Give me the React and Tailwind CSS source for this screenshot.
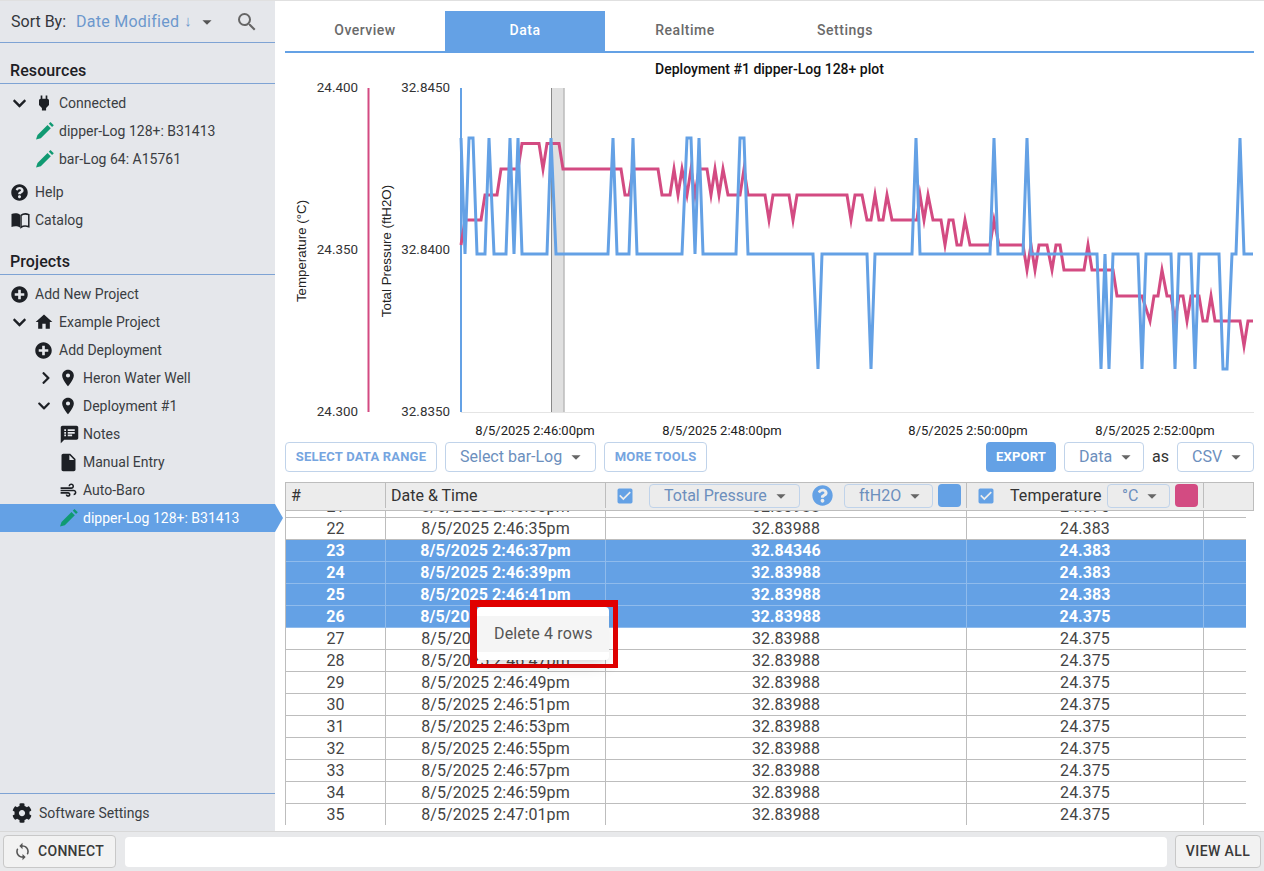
import { FaChevronDown, FaChevronRight, FaPlusCircle, FaQuestionCircle, FaCog } from 'react-icons/fa';
import {
  MdPower, MdHome, MdPlace, MdSpeakerNotes, MdInsertDriveFile, MdAir,
  MdSearch, MdArrowDropDown, MdCheckBox, MdSync,
} from 'react-icons/md';

const FONT = "font-['Roboto',sans-serif]";

// chart levels, in page pixels
const T = 138;
const B = 254;
const L = 369;
const R = [0, 143.5, 169, 195, 220, 245, 270, 296, 321, 346];

const bluePoints = [
  [461, T], [465, B], [469, T], [473, T], [477, B], [485, B], [489, T], [494, B], [506, B], [510, T], [514, B],
  [518, T], [522, B], [547, B], [551, T], [556, B], [608, B], [613, T], [617, B], [629, B], [633, T], [637, B],
  [682, B], [687, T], [691, T], [695, B], [699, T], [703, B], [736, B], [740, T], [744, T], [748, B], [813, B],
  [818, L], [822, B], [867, B], [871, L], [875, B], [912, B], [916, T], [920, B], [990, B], [994, T], [998, B],
  [1023, B], [1027, T], [1031, B], [1097, B], [1101, L], [1105, B], [1109, L], [1113, B], [1138, B], [1142, L],
  [1146, B], [1171, B], [1175, L], [1179, B], [1191, B], [1195, L], [1199, B], [1219, B], [1223, L], [1227, L],
  [1232, B], [1236, B], [1240, T], [1244, B], [1253, B],
];

const pinkPoints = [
  [461, 5], [465, 4], [481, 4], [485, 3], [497, 3], [501, 2], [518, 2], [522, 1], [539, 1], [543, 2], [547, 1],
  [559, 1], [563, 2], [621, 2], [625, 3], [629, 3], [633, 2], [658, 2], [662, 3], [670, 3], [674, 2], [678, 3],
  [682, 2], [687, 3], [691, 2], [695, 3], [699, 2], [707, 2], [711, 3], [715, 2], [719, 3], [723, 2], [728, 3],
  [740, 3], [744, 2], [748, 3], [765, 3], [769, 4], [773, 3], [789, 3], [793, 4], [797, 3], [847, 3], [851, 4],
  [855, 3], [862, 3], [867, 4], [871, 4], [875, 3], [879, 4], [883, 4], [887, 3], [892, 4], [917, 4], [920, 3],
  [924, 4], [928, 3], [933, 4], [941, 4], [945, 5], [949, 4], [953, 4], [957, 5], [961, 5], [965, 4], [970, 5],
  [990, 5], [994, 4], [999, 5], [1023, 5], [1027, 6], [1031, 5], [1035, 6], [1039, 5], [1047, 5], [1052, 6],
  [1056, 5], [1060, 5], [1064, 6], [1084, 6], [1088, 5], [1092, 6], [1113, 6], [1117, 7], [1142, 7], [1150, 8],
  [1154, 7], [1158, 7], [1162, 6], [1167, 7], [1171, 7], [1175, 8], [1179, 7], [1183, 7], [1187, 8], [1191, 7],
  [1199, 7], [1203, 8], [1207, 8], [1211, 7], [1215, 8], [1240, 8], [1244, 9], [1248, 8], [1253, 8],
];

const toLine = (points) => points.map(([x, y]) => `${x},${y}`).join(' ');
const bluePolyline = toLine(bluePoints);
const pinkPolyline = toLine(pinkPoints.map(([x, level]) => [x, R[level]]));

const rows = [
  [21, '8/5/2025 2:46:33pm', '32.83988', '24.375'],
  [22, '8/5/2025 2:46:35pm', '32.83988', '24.383'],
  [23, '8/5/2025 2:46:37pm', '32.84346', '24.383', true],
  [24, '8/5/2025 2:46:39pm', '32.83988', '24.383', true],
  [25, '8/5/2025 2:46:41pm', '32.83988', '24.383', true],
  [26, '8/5/2025 2:46:43pm', '32.83988', '24.375', true],
  [27, '8/5/2025 2:46:45pm', '32.83988', '24.375'],
  [28, '8/5/2025 2:46:47pm', '32.83988', '24.375'],
  [29, '8/5/2025 2:46:49pm', '32.83988', '24.375'],
  [30, '8/5/2025 2:46:51pm', '32.83988', '24.375'],
  [31, '8/5/2025 2:46:53pm', '32.83988', '24.375'],
  [32, '8/5/2025 2:46:55pm', '32.83988', '24.375'],
  [33, '8/5/2025 2:46:57pm', '32.83988', '24.375'],
  [34, '8/5/2025 2:46:59pm', '32.83988', '24.375'],
  [35, '8/5/2025 2:47:01pm', '32.83988', '24.375'],
];

const Pencil = () => (
  <svg width="20" height="20" viewBox="0 0 20 20" className="shrink-0">
    <path d="M1 18.5 L2.5 14 L12.5 4 L15.8 7.3 L5.8 17.3 Z" fill="#109a72" />
    <path d="M13.8 2.7 L15.5 1 L18.8 4.3 L17.1 6 Z" fill="#109a72" />
  </svg>
);

const BookIcon = () => (
  <svg width="19" height="17" viewBox="0 0 19 17">
    <path d="M0.5 2 C3 1 7 1 9 2.8 V15.5 C7 14 3 14 0.5 15 Z" fill="#1d2025" />
    <path d="M10 3.4 C12 1.8 15.5 1.7 17.8 2.6 V14.8 C15.5 14 12 14 10 15.4 Z" fill="none" stroke="#1d2025" strokeWidth="1.5" />
  </svg>
);

const NavRow = ({ indent, icon, chevron, children, height = 'h-7' }) => (
  <div className={`flex items-center ${height} text-[14px] text-[#3a3d42]`} style={{ paddingLeft: indent }}>
    {chevron && <span className="w-[24px] flex items-center text-[#1d2025]">{chevron}</span>}
    <span className="w-[24px] flex items-center text-[#1d2025]">{icon}</span>
    <span className="whitespace-nowrap">{children}</span>
  </div>
);

const Sidebar = () => (
  <aside className="w-[275px] shrink-0 bg-[#e5e7eb] flex flex-col">
    <div className="h-[42px] shrink-0 flex items-center pl-[11px] border-b border-[#7ea3d4] text-[16px] text-[#33363b]">
      <span>Sort By:</span>
      <span className="ml-[10px] tracking-[0.25px] text-[#6c98cd]">Date Modified</span>
      <span className="ml-[5px] text-[#6c98cd] text-[15px]">↓</span>
      <MdArrowDropDown className="ml-[4px] text-[22px] text-[#555]" />
      <MdSearch className="ml-[17px] text-[24px] text-[#666]" />
    </div>

    <div className="h-[41px] shrink-0 flex items-end pl-[10px] border-b border-[#7ea3d4] text-[16px] font-medium tracking-[0.1px] text-[#1d2025]">
      Resources
    </div>
    <div className="pt-[5px]">
      <NavRow indent={11} chevron={<FaChevronDown className="text-[15px] ml-[1px]" />} icon={<MdPower className="text-[20px] -ml-[1px]" />}>
        Connected
      </NavRow>
      <NavRow indent={35} icon={<Pencil />}>dipper-Log 128+: B31413</NavRow>
      <NavRow indent={35} icon={<Pencil />}>bar-Log 64: A15761</NavRow>
      <div className="h-[5px]" />
      <NavRow indent={11} icon={<FaQuestionCircle className="text-[17px]" />}>Help</NavRow>
      <NavRow indent={11} icon={<BookIcon />}>Catalog</NavRow>
    </div>

    <div className="h-[41px] shrink-0 flex items-end pl-[10px] border-b border-[#7ea3d4] text-[16px] font-medium tracking-[0.1px] text-[#1d2025]">
      Projects
    </div>
    <div className="pt-[5px]">
      <NavRow indent={11} icon={<FaPlusCircle className="text-[17px]" />}>Add New Project</NavRow>
      <NavRow indent={11} chevron={<FaChevronDown className="text-[15px] ml-[1px]" />} icon={<MdHome className="text-[20px] -ml-[1px]" />}>
        Example Project
      </NavRow>
      <NavRow indent={35} icon={<FaPlusCircle className="text-[17px]" />}>Add Deployment</NavRow>
      <NavRow indent={35} chevron={<FaChevronRight className="text-[14px] ml-[4px]" />} icon={<MdPlace className="text-[20px] -ml-[1px]" />}>
        Heron Water Well
      </NavRow>
      <NavRow indent={35} chevron={<FaChevronDown className="text-[14px] ml-[2px]" />} icon={<MdPlace className="text-[20px] -ml-[1px]" />}>
        Deployment #1
      </NavRow>
      <NavRow indent={59} icon={<MdSpeakerNotes className="text-[21px]" />}>Notes</NavRow>
      <NavRow indent={59} icon={<MdInsertDriveFile className="text-[21px] -ml-[1px]" />}>Manual Entry</NavRow>
      <NavRow indent={59} icon={<MdAir className="text-[19px]" />}>Auto-Baro</NavRow>
      <div className="relative w-[284px] h-7 pl-[59px] flex items-center bg-[#64a1e5] text-white text-[14px] [clip-path:polygon(0_0,275px_0,283px_50%,275px_100%,0_100%)]">
        <span className="w-[24px] flex items-center"><Pencil /></span>
        dipper-Log 128+: B31413
      </div>
    </div>

    <div className="mt-auto h-[38px] shrink-0 flex items-center pl-[12px] pt-[1px] border-t border-[#7ea3d4] text-[14px] text-[#3a3d42]">
      <FaCog className="text-[20px] text-[#1d2025] mr-[7px]" />
      Software Settings
    </div>
  </aside>
);

const Tabs = () => {
  const tabs = ['Overview', 'Data', 'Realtime', 'Settings'];
  return (
    <div className="flex h-[42px] shrink-0 border-b-2 border-[#64a1e5]">
      {tabs.map((tab) => (
        <div
          key={tab}
          className={`w-[160px] flex items-center justify-center pb-[2px] text-[14px] font-medium tracking-[0.5px] ${
            tab === 'Data' ? 'bg-[#64a1e5] text-white font-bold' : 'text-[#6a6a6a]'
          }`}
        >
          {tab}
        </div>
      ))}
    </div>
  );
};

const Chart = () => (
  <svg viewBox="285 58 969 384" className="w-[969px] h-[384px] block shrink-0">
    <text x="769.5" y="74" textAnchor="middle" fontFamily="Roboto, sans-serif" fontWeight="500" fontSize="14" fill="#111">
      Deployment #1 dipper-Log 128+ plot
    </text>

    <g fontFamily="Roboto, sans-serif" fontSize="13.4" fill="#333" textAnchor="end">
      <text x="358" y="92">24.400</text>
      <text x="358" y="254">24.350</text>
      <text x="358" y="416">24.300</text>
      <text x="450" y="92">32.8450</text>
      <text x="450" y="254">32.8400</text>
      <text x="450" y="416">32.8350</text>
    </g>

    <g fontFamily="'Liberation Sans', sans-serif" fontSize="13.3" fill="#222" textAnchor="middle">
      <text transform="translate(306 251) rotate(-90)">Temperature (°C)</text>
      <text transform="translate(391 251) rotate(-90)">Total Pressure (ftH2O)</text>
    </g>

    <g fontFamily="Roboto, sans-serif" fontSize="13" fill="#222" textAnchor="middle">
      <text x="535" y="435">8/5/2025 2:46:00pm</text>
      <text x="722" y="435">8/5/2025 2:48:00pm</text>
      <text x="968" y="435">8/5/2025 2:50:00pm</text>
      <text x="1155" y="435">8/5/2025 2:52:00pm</text>
    </g>

    <line x1="368.5" y1="88" x2="368.5" y2="412" stroke="#d34b82" strokeWidth="2" />
    <line x1="461" y1="88" x2="461" y2="412" stroke="#64a1e5" strokeWidth="2" />
    <line x1="461" y1="412.5" x2="1254" y2="412.5" stroke="#e4e4e4" strokeWidth="1" />

    <rect x="551" y="88" width="13" height="324" fill="#e0e0e0" />
    <line x1="551.5" y1="88" x2="551.5" y2="412" stroke="#888" strokeWidth="1" />
    <line x1="564" y1="88" x2="564" y2="412" stroke="#bbb" strokeWidth="1.5" />

    <polyline points={pinkPolyline} fill="none" stroke="#d34b82" strokeWidth="3" strokeMiterlimit="10" />
    <polyline points={bluePolyline} fill="none" stroke="#64a1e5" strokeWidth="3" />
  </svg>
);

const OutlineButton = ({ className, children }) => (
  <div className={`h-[30px] flex items-center justify-center rounded border border-[#c0d3ea] text-[13px] font-bold tracking-[0.2px] text-[#76a5e0] ${className}`}>
    {children}
  </div>
);

const SelectBox = ({ className, text, small }) => (
  <div className={`flex items-center pl-[14px] rounded border border-[#c0d3ea] text-[16px] text-[#6c8fbd] ${small ? 'h-6' : 'h-[30px]'} ${className}`}>
    <span>{text}</span>
    <MdArrowDropDown className="text-[22px] text-[#666] ml-[3px]" />
  </div>
);

const Toolbar = () => (
  <div className="flex items-center h-[30px] shrink-0">
    <OutlineButton className="w-[152px]">SELECT DATA RANGE</OutlineButton>
    <SelectBox className="w-[151px] ml-2" text="Select bar-Log" />
    <OutlineButton className="w-[103px] ml-2">MORE TOOLS</OutlineButton>
    <div className="ml-auto h-[30px] w-[70px] flex items-center justify-center rounded bg-[#64a1e5] text-white text-[13px] font-bold tracking-[0.2px]">
      EXPORT
    </div>
    <SelectBox className="w-[80px] ml-2" text="Data" />
    <span className="w-[33px] text-center text-[16px] text-[#333]">as</span>
    <SelectBox className="w-[77px]" text="CSV" />
  </div>
);

const TableHeader = () => (
  <div className="grid grid-cols-[99px_220px_361px_237px_50px] h-[29px] pb-[2px] shrink-0 bg-[#ececec] border border-[#bdbdbd] text-[16px] text-[#333]">
    <div className="flex items-center pl-[5px]">#</div>
    <div className="flex items-center pl-[5px] border-l border-[#bdbdbd]">Date &amp; Time</div>
    <div className="flex items-center pl-[9px] border-l border-[#bdbdbd]">
      <MdCheckBox className="text-[20px] text-[#64a1e5]" />
      <SelectBox small className="w-[151px] ml-[14px]" text="Total Pressure" />
      <FaQuestionCircle className="ml-[12px] text-[21px] text-[#64a1e5]" />
      <SelectBox small className="w-[89px] ml-[11px]" text="ftH2O" />
      <div className="ml-[5px] w-[23px] h-[23px] rounded-sm bg-[#64a1e5]" />
    </div>
    <div className="flex items-center pl-[9px] border-l border-[#bdbdbd]">
      <MdCheckBox className="text-[20px] text-[#64a1e5]" />
      <span className="ml-[14px] w-[92px] tracking-[0.1px] whitespace-nowrap">Temperature</span>
      <SelectBox small className="w-[63px] ml-[5px]" text="°C" />
      <div className="ml-[5px] w-[23px] h-[23px] rounded-sm bg-[#d34b82]" />
    </div>
    <div className="border-l border-[#bdbdbd]" />
  </div>
);

const TableBody = () => (
  <div className="h-[314px] overflow-hidden shrink-0 border-l border-[#bdbdbd]">
    <div className="-mt-[15px]">
      {rows.map(([num, date, pressure, temp, selected]) => (
        <div
          key={num}
          className={`grid grid-cols-[99px_220px_361px_237px_43px] h-[22px] w-[960px] border-b text-[16px] leading-[21px] tracking-[0.1px] text-center ${
            selected ? 'bg-[#64a1e5] text-white font-bold border-[#8fbbec]' : 'text-[#444] border-[#bdbdbd]'
          }`}
        >
          <div>{num}</div>
          <div className={`border-l ${selected ? 'border-[#8fbbec]' : 'border-[#bdbdbd]'}`}>{date}</div>
          <div className={`border-l ${selected ? 'border-[#8fbbec]' : 'border-[#bdbdbd]'}`}>{pressure}</div>
          <div className={`border-l ${selected ? 'border-[#8fbbec]' : 'border-[#bdbdbd]'}`}>{temp}</div>
          <div className={`border-l ${selected ? 'border-[#8fbbec]' : 'border-[#bdbdbd]'}`} />
        </div>
      ))}
    </div>
  </div>
);

const ContextMenu = () => (
  <>
    <div className="absolute left-[470px] top-[600px] w-[148px] h-[68px] border-t-[7px] border-l-[7px] border-r-[5px] border-b-[4px] border-[#e00000]" />
    <div className="absolute left-[477px] top-[607px] w-[132px] h-[53px] rounded bg-white shadow-lg flex items-center">
      <div className="w-full h-[36px] bg-[#f5f5f5] flex items-center pl-[17px] text-[16px] tracking-[0.15px] text-[#555]">
        Delete 4 rows
      </div>
    </div>
  </>
);

const BottomBar = () => (
  <div className="h-[40px] shrink-0 flex items-center bg-[#e8e9eb] border-t border-[#d8d8d8] pl-[3px] pr-[3px]">
    <div className="w-[113px] h-[33px] flex items-center pl-[9px] rounded border border-[#c8c8c8] bg-[#f2f2f2] text-[14px] font-medium tracking-[0.3px] text-[#3a3a3a]">
      <MdSync className="text-[19px] mr-[6px] text-[#555]" />
      CONNECT
    </div>
    <div className="ml-[9px] w-[1042px] h-[30px] rounded-sm bg-white" />
    <div className="ml-[8px] w-[86px] h-[33px] flex items-center justify-center rounded border border-[#c8c8c8] bg-[#f2f2f2] text-[14px] font-medium tracking-[0.4px] text-[#3a3a3a]">
      VIEW ALL
    </div>
  </div>
);

const App = () => (
  <div className={`relative w-[1264px] h-[871px] overflow-hidden bg-white flex flex-col ${FONT}`}>
    <div className="flex flex-1 min-h-0 border-t border-[#e0e0e0]">
      <Sidebar />
      <main className="flex-1 min-w-0 pl-[10px] pr-[10px] pt-[10px] flex flex-col">
        <Tabs />
        <div className="h-[5px] shrink-0" />
        <Chart />
        <Toolbar />
        <div className="h-[10px] shrink-0" />
        <TableHeader />
        <TableBody />
      </main>
    </div>
    <BottomBar />
    <ContextMenu />
  </div>
);

export default App;
